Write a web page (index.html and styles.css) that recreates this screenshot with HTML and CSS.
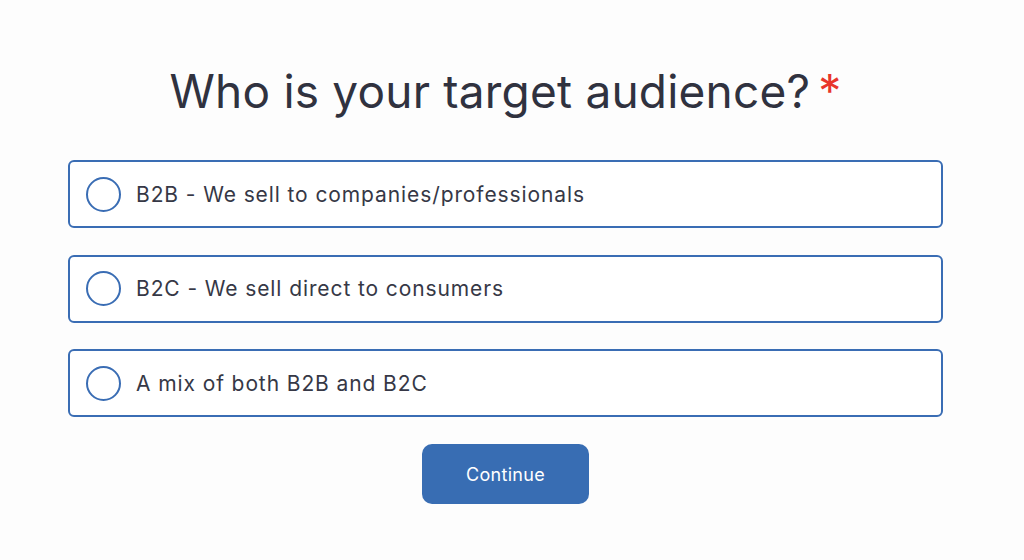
FILE: index.html
```html
<!DOCTYPE html>
<html lang="en">
<head>
  <meta charset="UTF-8">
  <meta name="viewport" content="width=device-width, initial-scale=1.0">
  <title>Target audience</title>
  <link rel="stylesheet" href="styles.css">
</head>
<body>
  <div class="question">
    <h1 class="titre">Who is your target audience?<span class="requis">*</span></h1>
    <div class="options">
      <label class="option"><span class="radio"></span>B2B - We sell to companies/professionals</label>
      <label class="option"><span class="radio"></span>B2C - We sell direct to consumers</label>
      <label class="option"><span class="radio"></span>A mix of both B2B and B2C</label>
    </div>
    <button class="continuer">Continue</button>
  </div>
</body>
</html>
```

FILE: styles.css
```css
body {
  margin: 0;
  background-color: #fdfdfd;
  font-family: Inter, "Noto Sans", sans-serif;
  color: #30323f;
}
.question {
  width: 875px;
  margin-left: 68px;
  padding-top: 58px;
  display: flex;
  flex-direction: column;
  align-items: center;
}
.titre {
  margin: 0 0 36px 0;
  font-size: 46px;
  font-weight: 400;
  line-height: 66px;
  letter-spacing: 0.2px;
}
.requis {
  color: #e8352b;
  margin-left: 8px;
}
.options {
  width: 100%;
  display: flex;
  flex-direction: column;
  gap: 26.5px;
}
.option {
  display: flex;
  align-items: center;
  height: 68px;
  box-sizing: border-box;
  border: 2px solid #3a6db4;
  border-radius: 6px;
  background-color: #fff;
  padding-left: 16px;
  font-size: 21px;
  letter-spacing: 0.9px;
  color: #363846;
  cursor: pointer;
}
.radio {
  width: 35px;
  height: 35px;
  box-sizing: border-box;
  border: 2px solid #3a6db4;
  border-radius: 50%;
  margin-right: 15px;
  flex-shrink: 0;
}
.continuer {
  margin-top: 27px;
  width: 167px;
  height: 60px;
  border: none;
  border-radius: 10px;
  background-color: #386db3;
  color: #fff;
  font-family: Inter, "Noto Sans", sans-serif;
  font-size: 18px;
  letter-spacing: 0.3px;
  cursor: pointer;
}
```
